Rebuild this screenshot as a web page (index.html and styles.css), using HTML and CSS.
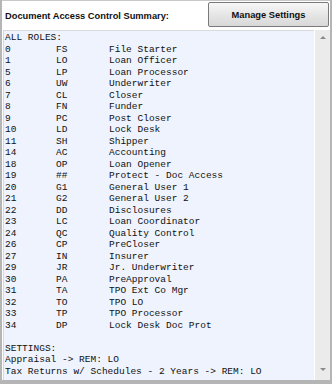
FILE: index.html
```html
<!DOCTYPE html>
<html lang="en">
<head>
    <meta charset="UTF-8">
    <title>Document Access Control Summary</title>
    <link rel="stylesheet" href="styles.css">
</head>
<body>
    <div class="panel">
        <div class="header">
            <span class="title">Document Access Control Summary:</span>
            <button class="manage">Manage Settings</button>
        </div>
        <div class="box">
            <div class="summary">
                <div class="line">ALL ROLES:</div>
                <div class="row"><span>0</span><span>FS</span><span>File Starter</span></div>
                <div class="row"><span>1</span><span>LO</span><span>Loan Officer</span></div>
                <div class="row"><span>5</span><span>LP</span><span>Loan Processor</span></div>
                <div class="row"><span>6</span><span>UW</span><span>Underwriter</span></div>
                <div class="row"><span>7</span><span>CL</span><span>Closer</span></div>
                <div class="row"><span>8</span><span>FN</span><span>Funder</span></div>
                <div class="row"><span>9</span><span>PC</span><span>Post Closer</span></div>
                <div class="row"><span>10</span><span>LD</span><span>Lock Desk</span></div>
                <div class="row"><span>11</span><span>SH</span><span>Shipper</span></div>
                <div class="row"><span>14</span><span>AC</span><span>Accounting</span></div>
                <div class="row"><span>18</span><span>OP</span><span>Loan Opener</span></div>
                <div class="row"><span>19</span><span>##</span><span>Protect - Doc Access</span></div>
                <div class="row"><span>20</span><span>G1</span><span>General User 1</span></div>
                <div class="row"><span>21</span><span>G2</span><span>General User 2</span></div>
                <div class="row"><span>22</span><span>DD</span><span>Disclosures</span></div>
                <div class="row"><span>23</span><span>LC</span><span>Loan Coordinator</span></div>
                <div class="row"><span>24</span><span>QC</span><span>Quality Control</span></div>
                <div class="row"><span>26</span><span>CP</span><span>PreCloser</span></div>
                <div class="row"><span>27</span><span>IN</span><span>Insurer</span></div>
                <div class="row"><span>29</span><span>JR</span><span>Jr. Underwriter</span></div>
                <div class="row"><span>30</span><span>PA</span><span>PreApproval</span></div>
                <div class="row"><span>31</span><span>TA</span><span>TPO Ext Co Mgr</span></div>
                <div class="row"><span>32</span><span>TO</span><span>TPO LO</span></div>
                <div class="row"><span>33</span><span>TP</span><span>TPO Processor</span></div>
                <div class="row"><span>34</span><span>DP</span><span>Lock Desk Doc Prot</span></div>
                <div class="line">&nbsp;</div>
                <div class="line">SETTINGS:</div>
                <div class="line">Appraisal -&gt; REM: LO</div>
                <div class="line">Tax Returns w/ Schedules - 2 Years -&gt; REM: LO</div>
            </div>
            <div class="scrollbar">
                <span class="arrow up"></span>
                <span class="arrow down"></span>
            </div>
        </div>
    </div>
</body>
</html>
```

FILE: styles.css
```css
*{
    box-sizing: border-box;
}

body{
    margin: 0;
    background-color: #b5b5b5;
    font-family: "Liberation Sans", Arial, sans-serif;
}

.panel{
    width: 332px;
    height: 384px;
    padding: 0 2px 4px 2px;
}

.header{
    display: flex;
    justify-content: space-between;
    align-items: center;
    height: 29px;
    padding: 1px 1px 2px 3px;
    background-color: #ffffff;
    border-top: 1px solid #c8c8c8;
}

.title{
    font-size: 9.3px;
    font-weight: bold;
    color: #111111;
    padding-top: 2px;
}

.manage{
    width: 121px;
    height: 25px;
    font-family: "Liberation Sans", Arial, sans-serif;
    font-size: 9.3px;
    font-weight: bold;
    color: #111111;
    border: 1px solid #7a7a7a;
    border-radius: 2px;
    background: linear-gradient(#f7f7f7, #e6e6e6 50%, #d8d8d8);
    padding: 0;
}

.box{
    display: flex;
    height: 351px;
    background-color: #ffffff;
    padding: 1px 0 0 1px;
}

.summary{
    flex: 1;
    background-color: #eef3fd;
    border-left: 1px solid #d9d9d9;
    border-top: 1px solid #d9d9d9;
    padding: 1px 0 0 1px;
    font-family: "Liberation Mono", "Courier New", monospace;
    font-size: 9.5px;
    line-height: 11.5px;
    color: #111111;
    overflow: hidden;
}

.line,
.row{
    height: 11.5px;
    white-space: pre;
}

.row{
    display: flex;
}

.row span:nth-child(1){
    width: 51px;
}

.row span:nth-child(2){
    width: 53px;
}

.scrollbar{
    width: 16px;
    background-color: #ebebeb;
    border-left: 1px solid #ffffff;
    display: flex;
    flex-direction: column;
    justify-content: space-between;
    align-items: center;
    padding: 6px 0 9px 0;
}

.arrow{
    width: 0;
    height: 0;
    border-left: 3px solid transparent;
    border-right: 3px solid transparent;
}

.arrow.up{
    border-bottom: 3px solid #8a8a8a;
}

.arrow.down{
    border-top: 3px solid #8a8a8a;
}
```
